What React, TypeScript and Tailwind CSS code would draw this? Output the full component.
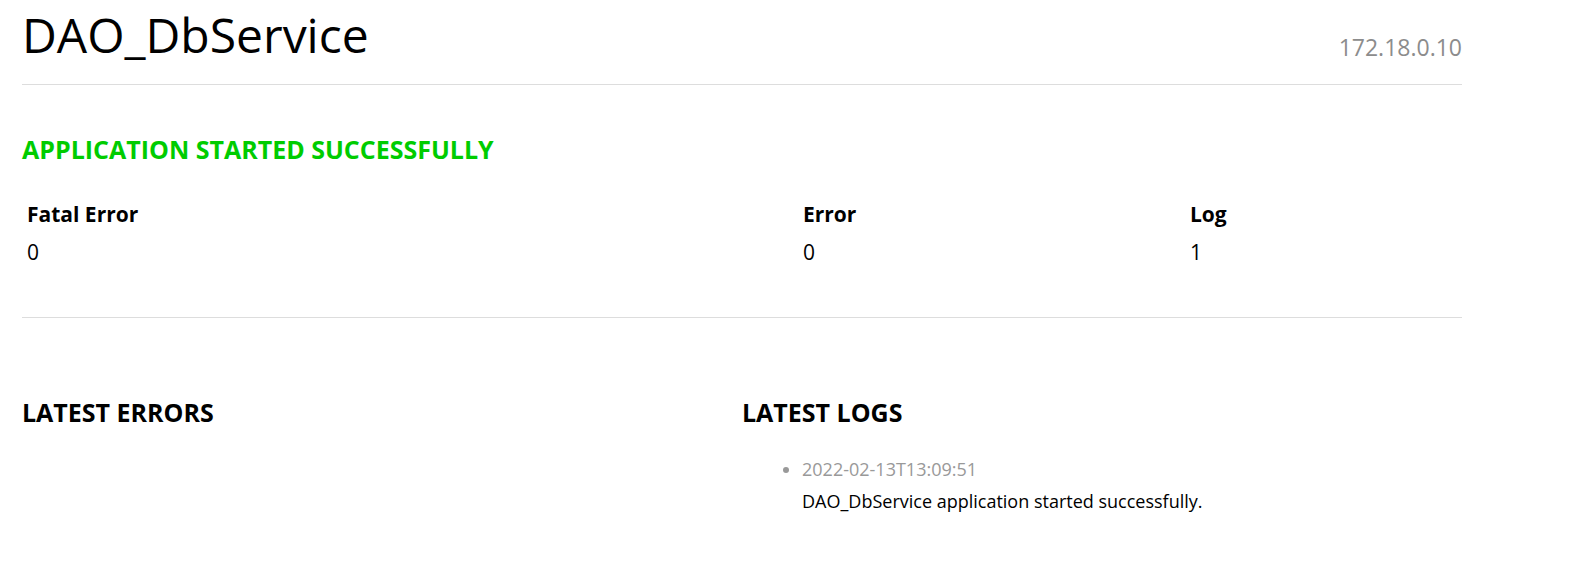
const stats = [
  { label: "Fatal Error", value: 0, width: "w-[776px]" },
  { label: "Error", value: 0, width: "w-[387px]" },
  { label: "Log", value: 1, width: "" },
];

const logs = [
  {
    time: "2022-02-13T13:09:51",
    message: "DAO_DbService application started successfully.",
  },
];

export default function App() {
  return (
    <div className="min-h-screen bg-white text-black font-['Open_Sans',sans-serif]">
      <div className="ml-[22px] w-[1440px] pt-[6px]">
        {/* Header */}
        <div className="flex items-end justify-between border-b border-[#dddddd] pb-[20px]">
          <h1 className="text-[48px] leading-[58px] font-normal">DAO_DbService</h1>
          <span className="text-[23px] leading-[30px] text-[#8c8c8c] mb-[2px]">172.18.0.10</span>
        </div>

        {/* Status */}
        <h2 className="mt-[48px] text-[25px] leading-[32px] font-bold text-[#00cc00]">
          APPLICATION STARTED SUCCESSFULLY
        </h2>

        <table className="mt-[30px] w-full border-collapse">
          <thead>
            <tr>
              {stats.map((s) => (
                <th
                  key={s.label}
                  className={`px-[5px] py-[5px] text-left text-[21px] leading-[28px] font-bold ${s.width}`}
                >
                  {s.label}
                </th>
              ))}
            </tr>
          </thead>
          <tbody>
            <tr>
              {stats.map((s) => (
                <td key={s.label} className="px-[5px] py-[5px] text-[21px] leading-[28px]">
                  {s.value}
                </td>
              ))}
            </tr>
          </tbody>
        </table>

        <div className="mt-[46px] border-t border-[#dddddd]" />

        {/* Latest */}
        <div className="mt-[78px] grid grid-cols-2">
          <div>
            <h3 className="text-[25px] leading-[32px] font-bold">LATEST ERRORS</h3>
          </div>
          <div>
            <h3 className="text-[25px] leading-[32px] font-bold">LATEST LOGS</h3>
            <ul className="mt-[29px] list-disc pl-[60px] text-[#999999]">
              {logs.map((l) => (
                <li key={l.time} className="text-[18px] leading-[24px]">
                  <div>{l.time}</div>
                  <div className="mt-[8px] text-black">{l.message}</div>
                </li>
              ))}
            </ul>
          </div>
        </div>
      </div>
    </div>
  );
}
